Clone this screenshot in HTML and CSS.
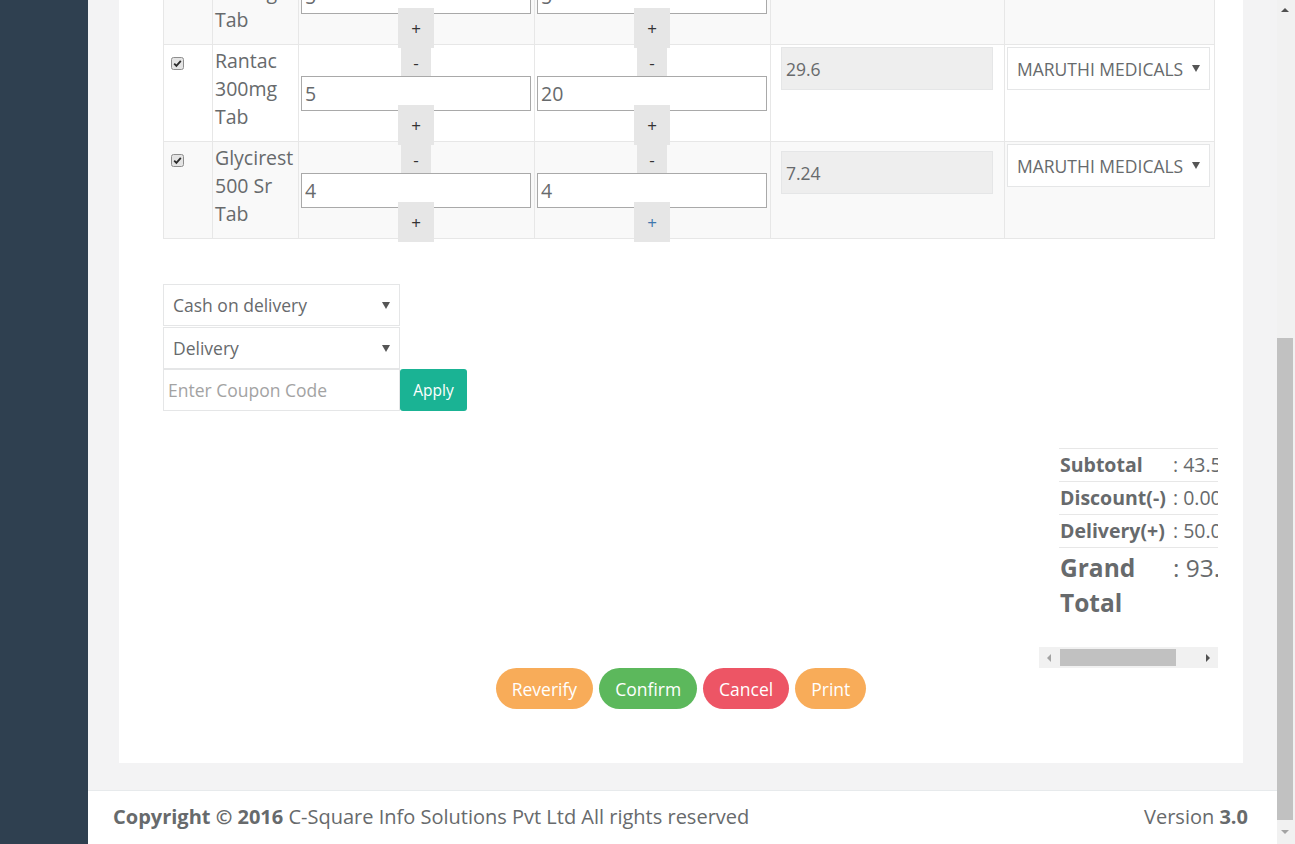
FILE: index.html
```html
<!DOCTYPE html>
<html lang="en">
<head>
<meta charset="utf-8">
<title>Order Review</title>
<link rel="stylesheet" href="styles.css">
</head>
<body>
<div class="app">
  <nav class="sidebar"></nav>
  <div class="main">
    <div class="content">
      <div class="panel">
        <table class="items">
          <colgroup>
            <col class="c-check"><col class="c-name"><col class="c-qty"><col class="c-qty"><col class="c-price"><col class="c-supp">
          </colgroup>
          <tbody>
            <tr class="odd">
              <td><svg class="cb" width="13" height="13" viewBox="0 0 13 13"><rect x="0.5" y="0.5" width="12" height="12" rx="2" fill="#e4e4e4" stroke="#8e8e8e"/><path d="M3.2 6.6 L5.4 8.9 L9.8 3.8" fill="none" stroke="#2b2b2b" stroke-width="1.8"/></svg></td>
              <td class="name">Zinetac 150mg Tab</td>
              <td><div class="spin"><div class="spin-btn spin-minus">-</div><input class="qty-input" type="text" value="5"><div class="spin-btn spin-plus">+</div></div></td>
              <td><div class="spin"><div class="spin-btn spin-minus">-</div><input class="qty-input" type="text" value="5"><div class="spin-btn spin-plus">+</div></div></td>
              <td><div class="price">14.7</div></td>
              <td><div class="select supp">MARUTHI MEDICALS<span class="caret"></span></div></td>
            </tr>
            <tr>
              <td><svg class="cb" width="13" height="13" viewBox="0 0 13 13"><rect x="0.5" y="0.5" width="12" height="12" rx="2" fill="#e4e4e4" stroke="#8e8e8e"/><path d="M3.2 6.6 L5.4 8.9 L9.8 3.8" fill="none" stroke="#2b2b2b" stroke-width="1.8"/></svg></td>
              <td class="name">Rantac 300mg Tab</td>
              <td><div class="spin"><div class="spin-btn spin-minus">-</div><input class="qty-input" type="text" value="5"><div class="spin-btn spin-plus">+</div></div></td>
              <td><div class="spin"><div class="spin-btn spin-minus">-</div><input class="qty-input" type="text" value="20"><div class="spin-btn spin-plus">+</div></div></td>
              <td><div class="price">29.6</div></td>
              <td><div class="select supp">MARUTHI MEDICALS<span class="caret"></span></div></td>
            </tr>
            <tr class="odd">
              <td><svg class="cb" width="13" height="13" viewBox="0 0 13 13"><rect x="0.5" y="0.5" width="12" height="12" rx="2" fill="#e4e4e4" stroke="#8e8e8e"/><path d="M3.2 6.6 L5.4 8.9 L9.8 3.8" fill="none" stroke="#2b2b2b" stroke-width="1.8"/></svg></td>
              <td class="name">Glycirest 500 Sr Tab</td>
              <td><div class="spin"><div class="spin-btn spin-minus">-</div><input class="qty-input" type="text" value="4"><div class="spin-btn spin-plus">+</div></div></td>
              <td><div class="spin"><div class="spin-btn spin-minus">-</div><input class="qty-input" type="text" value="4"><div class="spin-btn spin-plus is-active">+</div></div></td>
              <td><div class="price price-low">7.24</div></td>
              <td><div class="select supp">MARUTHI MEDICALS<span class="caret"></span></div></td>
            </tr>
          </tbody>
        </table>

        <div class="opts">
          <div class="select opt opt-first">Cash on delivery<span class="caret"></span></div>
          <div class="select opt">Delivery<span class="caret"></span></div>
          <div class="coupon">
            <input class="coupon-input" type="text" placeholder="Enter Coupon Code">
            <button class="apply" type="button">Apply</button>
          </div>
        </div>

        <div class="summary-box">
          <div class="summary-clip">
            <table class="summary">
              <colgroup><col class="s-label"><col class="s-val"></colgroup>
              <tbody>
                <tr><td class="lbl">Subtotal</td><td class="val">: 43.53</td></tr>
                <tr><td class="lbl">Discount(-)</td><td class="val">: 0.00</td></tr>
                <tr><td class="lbl">Delivery(+)</td><td class="val">: 50.00</td></tr>
                <tr class="grand"><td class="lbl">Grand Total</td><td class="val">: 93.53</td></tr>
              </tbody>
            </table>
          </div>
          <div class="hscroll">
            <span class="arr arr-left"></span>
            <span class="hthumb"></span>
            <span class="hspace"></span>
            <span class="arr arr-right"></span>
          </div>
        </div>

        <div class="actions">
          <button class="btn btn-warn" type="button">Reverify</button>
          <button class="btn btn-ok" type="button">Confirm</button>
          <button class="btn btn-danger" type="button">Cancel</button>
          <button class="btn btn-warn" type="button">Print</button>
        </div>
      </div>
    </div>
    <footer class="footer">
      <div><strong>Copyright © 2016</strong> C-Square Info Solutions Pvt Ltd All rights reserved</div>
      <div>Version <strong>3.0</strong></div>
    </footer>
  </div>
  <div class="vscroll">
    <div class="vbox vbox-up"><span class="varr varr-up"></span></div>
    <div class="vspace"></div>
    <div class="vthumb"></div>
    <div class="vbox vbox-down"><span class="varr varr-down"></span></div>
  </div>
</div>
</body>
</html>
```

FILE: styles.css
```css
* { box-sizing: border-box; }
html, body { margin: 0; padding: 0; height: 100%; overflow: hidden; }
body {
  font-family: "Open Sans", "Liberation Sans", sans-serif;
  color: #676a6c;
  font-size: 19.5px;
  line-height: 28px;
  background: #f3f3f4;
}
.app { display: flex; height: 844px; overflow: hidden; }
.sidebar { width: 88px; flex: none; background: #2f4050; }
.main { flex: 1; min-width: 0; display: flex; flex-direction: column; background: #f3f3f4; }
.content { height: 790px; flex: none; padding: 0 34px 27px 31px; overflow: hidden; }
.panel { background: #fff; height: 763px; padding: 0 25px 0 44px; overflow: hidden; }

/* items table */
.items { border-collapse: collapse; table-layout: fixed; width: 1051px; margin-top: -53px; }
.c-check { width: 49px; }
.c-name { width: 86px; }
.c-qty { width: 236px; }
.c-price { width: 234px; }
.c-supp { width: 210px; }
.items td { border: 1px solid #e7e7e7; padding: 2px 3px 0 2px; vertical-align: top; }
.items tr.odd td { background: #f9f9f9; }
.cb { display: block; margin: 10px 0 0 5px; }
.name { word-wrap: break-word; }

.spin { display: flex; flex-direction: column; align-items: center; }
.spin-btn {
  background: #e6e6e6; color: #333; font-size: 17px; line-height: 1;
  display: flex; align-items: center; justify-content: center;
}
.spin-minus { width: 30px; height: 28px; margin-top: 1px; }
.spin-plus { width: 36px; height: 40px; margin: -6px 0 -4px; position: relative; z-index: 1; }
.spin-plus.is-active { color: #3f77ad; }
.qty-input {
  display: block; width: 230px; height: 35px; margin: 0;
  border: 1px solid #a9a9a9; border-radius: 0; padding: 0 3px;
  font-family: inherit; font-size: 19.5px; color: #676a6c; background: #fff; outline: none;
}

.price {
  width: 212px; height: 43px; margin: 0 0 0 8px;
  background: #eee; border: 1px solid #e5e6e7;
  padding: 0 4px; display: flex; align-items: center; font-size: 17.5px;
}
.price-low { margin-top: 7px; }

.select {
  height: 43px; background: #fff; border: 1px solid #e5e6e7;
  padding: 0 9px 0 9px; display: flex; align-items: center; justify-content: space-between;
  font-size: 17.5px; white-space: nowrap;
}
.supp { width: 203px; }
.caret {
  width: 0; height: 0; flex: none;
  border-left: 4px solid transparent; border-right: 4px solid transparent;
  border-top: 7px solid #555;
}

/* options */
.opts { margin-top: 45px; }
.opt { width: 237px; height: 42px; }
.opt-first { margin-bottom: 1px; }
.coupon { display: flex; }
.coupon-input {
  width: 237px; height: 42px; margin: 0; border: 1px solid #e5e6e7; border-radius: 0;
  padding: 0 4px; font-family: inherit; font-size: 17.5px; color: #676a6c; outline: none;
}
.coupon-input::placeholder { color: #a3a3a3; }
.apply {
  width: 67px; height: 42px; border: 0; border-radius: 3px; background: #1ab394; color: #fff;
  font-family: inherit; font-size: 15.5px; padding: 0;
}

/* summary */
.summary-box { width: 179px; margin: 37px 0 0 auto; }
.summary-clip { overflow: hidden; padding-left: 20px; }
.summary { border-collapse: collapse; table-layout: fixed; width: 270px; margin-bottom: 23px; }
.s-label { width: 113px; }
.s-val { width: 157px; }
.summary td { border-top: 1px solid #e7e7e7; padding: 2px 1px; vertical-align: top; }
.summary .lbl { font-weight: 700; }
.summary .val { white-space: nowrap; }
.summary .grand td { font-size: 24.5px; line-height: 35px; padding: 2px 1px 4px; }

.hscroll { height: 21px; background: #f1f1f1; display: flex; align-items: center; }
.arr { width: 0; height: 0; flex: none; border-top: 4px solid transparent; border-bottom: 4px solid transparent; }
.arr-left { border-right: 4px solid #a3a3a3; margin: 0 9px 0 8px; }
.arr-right { border-left: 4px solid #505050; margin: 0 8px 0 0; }
.hthumb { width: 116px; height: 17px; background: #c1c1c1; flex: none; }
.hspace { flex: 1; }

/* actions */
.actions { display: flex; justify-content: center; gap: 6px; margin: 0 -25px 0 -44px; }
.btn {
  height: 41px; border: 0; border-radius: 21px; padding: 0 16px;
  font-family: inherit; font-size: 17.5px; color: #fff;
}
.btn-warn { background: #f8ac59; }
.btn-ok { background: #5cb85c; }
.btn-danger { background: #ed5565; }

/* footer */
.footer {
  height: 54px; flex: none; background: #fff; border-top: 1px solid #e7eaec;
  padding: 0 29px 1px 25px; display: flex; align-items: center; justify-content: space-between;
  font-size: 20px;
}
.footer strong { font-weight: 700; }

/* page scrollbar */
.vscroll { width: 18px; flex: none; background: #f1f1f1; display: flex; flex-direction: column; align-items: flex-start; }
.vbox { width: 16px; display: flex; justify-content: center; align-items: center; }
.vbox-up { height: 20px; }
.vbox-down { height: 24px; }
.vspace { height: 318px; }
.vthumb { width: 16px; height: 482px; background: #c1c1c1; }
.varr { width: 0; height: 0; border-left: 4px solid transparent; border-right: 4px solid transparent; }
.varr-up { border-bottom: 4px solid #505050; }
.varr-down { border-top: 4px solid #a3a3a3; }
```
